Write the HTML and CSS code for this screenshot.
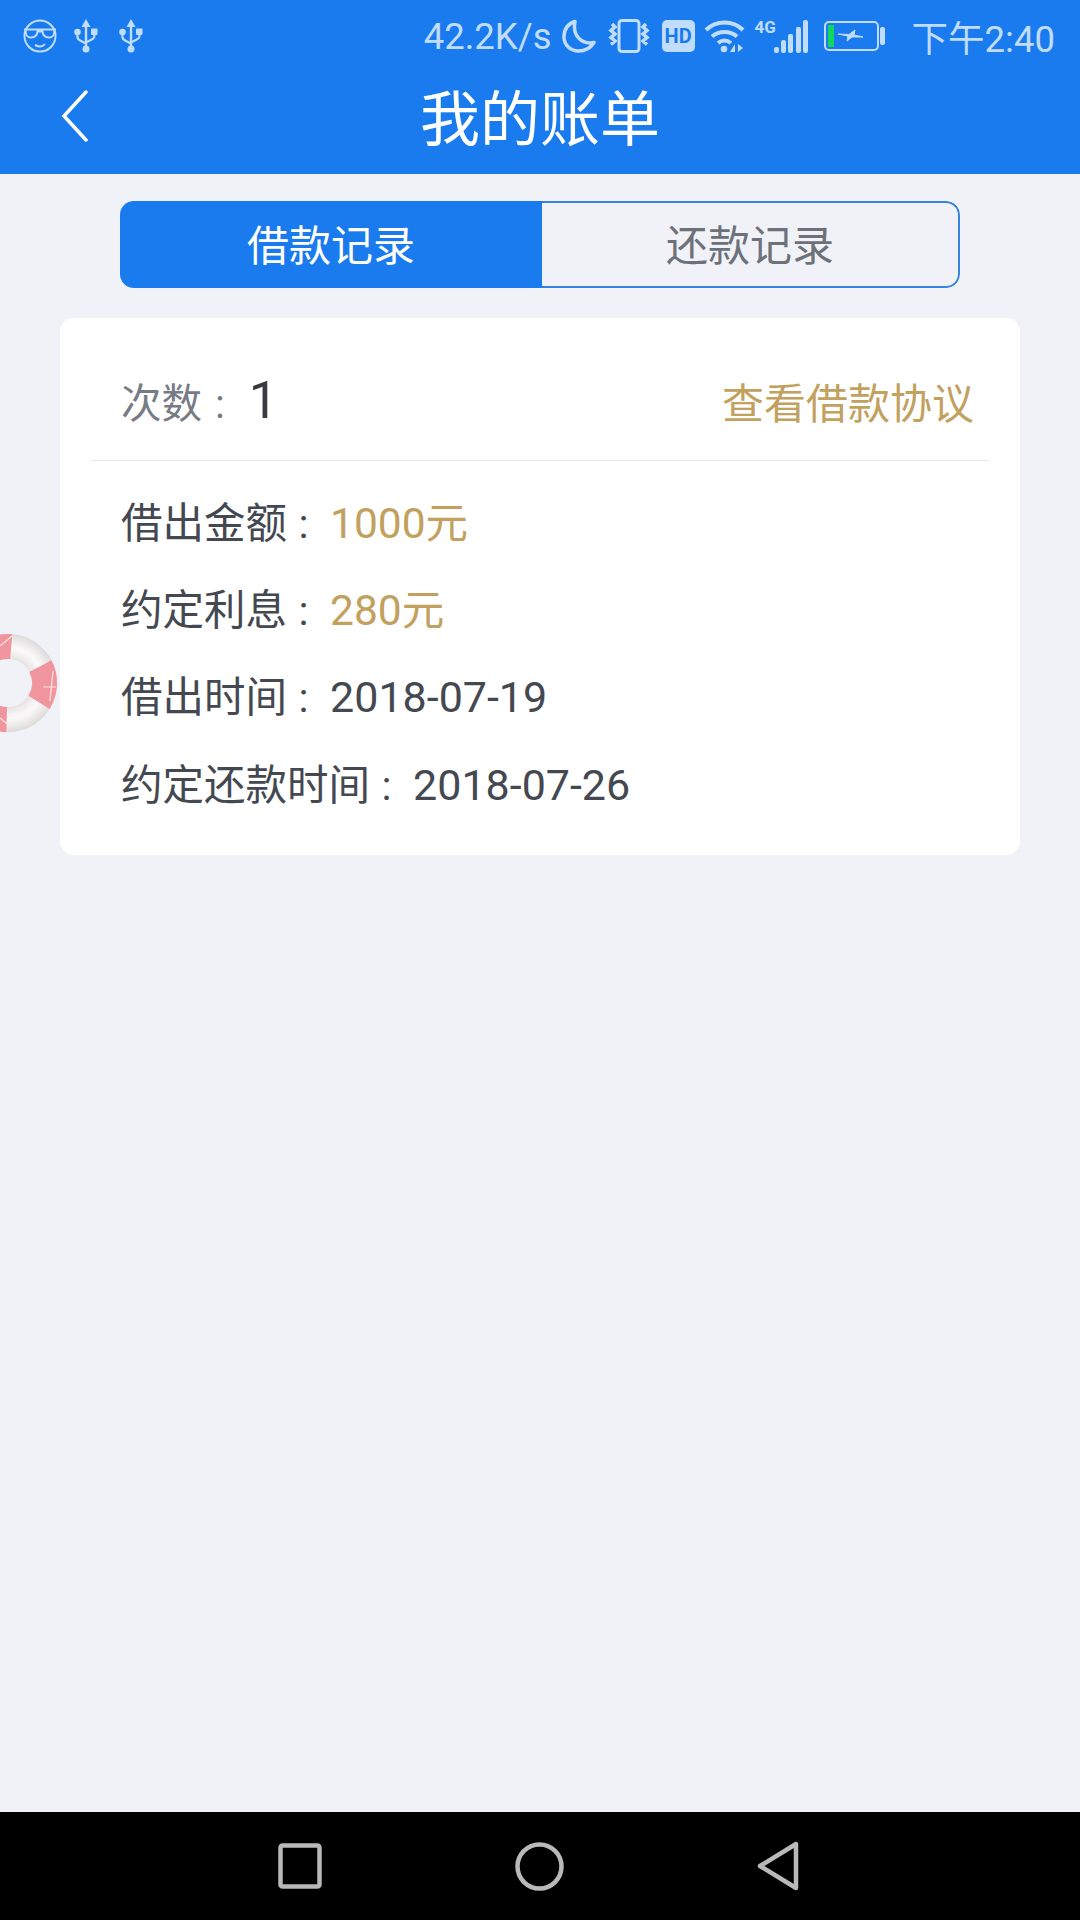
FILE: index.html
```html
<!DOCTYPE html>
<html lang="zh-CN">
<head>
   <meta charset="UTF-8">
   <title>我的账单</title>
   <link rel="stylesheet" href="styles.css">
</head>

<body>

<div class="top">
   <div class="status">
      <div class="status-left">
         <svg class="ic-face" viewBox="0 0 34 34" width="34" height="34" fill="none" stroke="#c0dcff" stroke-width="2">
            <circle cx="17" cy="17" r="15.500"/>
            <path d="M1 10.500h32M2.500 10.500c0 6 1.500 8 5.500 8s6-2 6.500-6h5c.5 4 2.500 6 6.500 6s5.500-2 5.500-8"/>
            <path d="M12 26c4 2 8 1.500 10-1"/>
         </svg>
         <svg class="ic-usb" viewBox="0 0 24 34" width="24" height="34" fill="#c0dcff">
            <path d="M12 0l4.500 8H13.200v19h-2.400V8H7.500z"/>
            <circle cx="12" cy="30" r="3.500"/>
            <circle cx="3.500" cy="13" r="3.300"/>
            <rect x="17" y="9.500" width="6.500" height="6.500" rx="1"/>
            <path d="M2.300 15h2.200v2c0 2 1 3 3 4l4 2v2.500l-5-2.500c-3-1.500-4.200-3-4.200-5.500zM19.300 15h2.200v1.500c0 2.500-1 4-4.200 5.500l-5 2.500V22l4-2c2-1 3-1.500 3-3z"/>
         </svg>
         <svg class="ic-usb" viewBox="0 0 24 34" width="24" height="34" fill="#c0dcff">
            <path d="M12 0l4.500 8H13.200v19h-2.400V8H7.500z"/>
            <circle cx="12" cy="30" r="3.500"/>
            <circle cx="3.500" cy="13" r="3.300"/>
            <rect x="17" y="9.500" width="6.500" height="6.500" rx="1"/>
            <path d="M2.300 15h2.200v2c0 2 1 3 3 4l4 2v2.500l-5-2.500c-3-1.500-4.200-3-4.200-5.500zM19.300 15h2.200v1.500c0 2.500-1 4-4.200 5.500l-5 2.500V22l4-2c2-1 3-1.500 3-3z"/>
         </svg>
      </div>
      <div class="status-right">
         <span class="speed">42.2K/s</span>
         <svg class="ic-moon" viewBox="0 0 34 34" width="34" height="34" fill="none" stroke="#c0dcff" stroke-width="3.500" stroke-linejoin="round">
            <path d="M13 2.500C5 5 2 11 2 18c0 8 6.500 14 14.500 14 6.500 0 12-3 15.500-8.500-11 2-22-5-19-21z"/>
         </svg>
         <svg class="ic-vib" viewBox="0 0 42 34" width="42" height="34" fill="none" stroke="#c0dcff" stroke-width="3">
            <rect x="11" y="1.500" width="20" height="31" rx="3"/>
            <path d="M4 5l3 3-4 3.500 4 3.500-4 3.500 4 3.500-4 3.500M38 5l-3 3 4 3.500-4 3.500 4 3.500-4 3.500 4 3.500" stroke-width="3.500"/>
         </svg>
         <span class="hd">HD</span>
         <svg class="ic-wifi" viewBox="0 0 42 34" width="42" height="34" fill="none" stroke="#c0dcff" stroke-width="4">
            <path d="M2 11C12 1 29 1 39 11M8 17.500c7-6 18-6 25 0M14 24c4-3 9-3 13 0"/>
            <circle cx="20" cy="30" r="3.300" fill="#c0dcff" stroke="none"/>
            <path d="M31 25v8h-5zM34 25l5 4-5 4z" fill="#c0dcff" stroke="none"/>
         </svg>
         <span class="net">
            <span class="net-label">4G</span>
            <svg viewBox="0 0 34 33" width="34" height="33" fill="#c0dcff">
               <rect x="0" y="27" width="5" height="6" rx="2"/>
               <rect x="7" y="20" width="5" height="13" rx="2"/>
               <rect x="14" y="14" width="5" height="19" rx="2"/>
               <rect x="22" y="7" width="5" height="26" rx="2"/>
               <rect x="29" y="0" width="5" height="33" rx="2"/>
            </svg>
         </span>
         <svg class="ic-batt" viewBox="0 0 62 30" width="62" height="30">
            <rect x="1" y="1" width="53" height="28" rx="4" fill="none" stroke="#c0dcff" stroke-width="2"/>
            <rect x="4" y="4" width="6" height="22" rx="1" fill="#0fd75f"/>
            <path d="M14 13l11 .5 6-4.500-1 5 9 2-11 0-5 4 1-5z" fill="#c0dcff" stroke="#c0dcff"/>
            <rect x="56" y="6" width="5" height="18" rx="2" fill="#c0dcff"/>
         </svg>
         <span class="clock">下午2:40</span>
      </div>
   </div>

   <div class="titlebar">
      <svg class="back" viewBox="0 0 28 52" width="28" height="52" fill="none" stroke="#fff" stroke-width="3.500" stroke-linecap="round">
         <path d="M25 2L3 26l22 24"/>
      </svg>
      <h1 class="title">我的账单</h1>
   </div>
</div>

<div class="main">
   <div class="tabs">
      <div class="tab on">借款记录</div>
      <div class="tab">还款记录</div>
   </div>

   <div class="card">
      <div class="card-head">
         <div class="count"><span class="label">次数<span class="sep">:</span></span><span class="num">1</span></div>
         <div class="link">查看借款协议</div>
      </div>
      <div class="rows">
         <div class="row">借出金额<span class="sep">:</span><span class="gold">1000元</span></div>
         <div class="row">约定利息<span class="sep">:</span><span class="gold">280元</span></div>
         <div class="row">借出时间<span class="sep">:</span><span class="val">2018-07-19</span></div>
         <div class="row">约定还款时间<span class="sep">:</span><span class="val">2018-07-26</span></div>
      </div>
   </div>

   <svg class="ring" viewBox="0 0 60 100" width="60" height="100">
      <defs>
         <radialGradient id="ringWhite" gradientUnits="userSpaceOnUse" cx="8" cy="50" r="49">
            <stop offset="0.5" stop-color="#e8e4e4"/>
            <stop offset="0.72" stop-color="#fbfafa"/>
            <stop offset="1" stop-color="#dfdbdb"/>
         </radialGradient>
      </defs>
      <circle cx="8" cy="50" r="36.500" fill="none" stroke="url(#ringWhite)" stroke-width="25"/>
      <g fill="none" stroke="#f0959d" stroke-width="25">
         <path d="M40.400 33.100A36.500 36.500 0 0 1 39 69.300"/>
         <path d="M-10.300 18.400A36.500 36.500 0 0 1 11.200 13.600"/>
         <path d="M6.700 86.500A36.500 36.500 0 0 1 -15.500 78"/>
      </g>
      <g fill="none" stroke="#fbe6e6" stroke-width="1.200">
         <path d="M43 54h13M53 38l-3 30"/>
         <path d="M0 13l12-10M0 85l10 8"/>
      </g>
   </svg>
</div>

<div class="navbar">
   <svg viewBox="0 0 44 46" width="44" height="46" fill="none" stroke="#b9b9b9" stroke-width="4.500">
      <rect x="2.500" y="2.500" width="39" height="41" rx="2"/>
   </svg>
   <svg viewBox="0 0 49 49" width="49" height="49" fill="none" stroke="#b9b9b9" stroke-width="4.500">
      <circle cx="24.500" cy="24.500" r="22"/>
   </svg>
   <svg viewBox="0 0 42 50" width="42" height="50" fill="none" stroke="#b9b9b9" stroke-width="4.500" stroke-linejoin="round">
      <path d="M39 3v44L3 25z"/>
   </svg>
</div>

</body>
</html>
```

FILE: styles.css
```css
html, body {
   height: 100%;
   margin: 0;
}

body {
   width: 1080px;
   height: 1920px;
   display: flex;
   flex-direction: column;
   background: #f0f2f7;
   font-family: Roboto, "Noto Sans CJK SC", sans-serif;
   color: #444851;
   overflow: hidden;
}

.top {
   background: #1a7bef;
   height: 174px;
}

.status {
   height: 66px;
   display: flex;
   justify-content: space-between;
   align-items: center;
   padding: 6px 25px 0 23px;
   box-sizing: border-box;
   color: #c0dcff;
}

.status-left, .status-right {
   display: flex;
   align-items: center;
}

.ic-usb {
   margin-left: 21px;
}

.ic-face + .ic-usb {
   margin-left: 17px;
}

.speed {
   font-size: 36.500px;
   margin-right: 10px;
}

.ic-vib {
   margin-left: 12px;
}

.hd {
   width: 33px;
   height: 32px;
   margin-left: 12px;
   border-radius: 5px;
   background: #c0dcff;
   color: #1a7bef;
   font-size: 20px;
   font-weight: 700;
   line-height: 32px;
   text-align: center;
}

.ic-wifi {
   margin-left: 9px;
}

.net {
   width: 53px;
   height: 33px;
   margin-left: 9px;
   position: relative;
   display: flex;
   justify-content: flex-end;
}

.net-label {
   position: absolute;
   left: 0;
   top: -3px;
   font-size: 17px;
   font-weight: 700;
}

.ic-batt {
   margin-left: 16px;
}

.clock {
   font-size: 36.500px;
   margin-left: 26px;
}

.titlebar {
   height: 108px;
   padding-bottom: 12px;
   box-sizing: border-box;
   position: relative;
   display: flex;
   justify-content: center;
   align-items: center;
}

.back {
   position: absolute;
   left: 61px;
   top: 24px;
}

.title {
   margin: 0;
   color: #fff;
   font-size: 60px;
   font-weight: 400;
}

.main {
   flex: 1;
   position: relative;
   padding: 27px 60px 0;
}

.tabs {
   width: 840px;
   height: 87px;
   margin: 0 auto;
   display: flex;
   border-radius: 14px;
   overflow: hidden;
}

.tab {
   flex: 1;
   box-sizing: border-box;
   padding-top: 2px;
   border: 2px solid #3483e0;
   border-left: none;
   border-radius: 0 14px 14px 0;
   font-size: 42px;
   line-height: 83px;
   text-align: center;
   color: #6d7179;
}

.tab.on {
   flex: none;
   width: 422px;
   border: none;
   border-radius: 0;
   padding-top: 4px;
   background: #1a7bef;
   color: #fff;
}

.card {
   margin-top: 30px;
   background: #fff;
   border-radius: 14px;
   height: 537px;
}

.card-head {
   height: 143px;
   margin: 0 30px;
   padding: 23px 16px 0 31px;
   box-sizing: border-box;
   border-bottom: 1px solid #e8eaee;
   display: flex;
   justify-content: space-between;
   align-items: center;
}

.count {
   display: flex;
   align-items: baseline;
}

.label {
   font-size: 40.500px;
   color: #777b84;
}

.sep {
   margin: 0 21.500px 0 11.500px;
}

.count .sep {
   margin: 0 24px 0 13px;
}

.num {
   font-size: 52px;
   color: #383a40;
}

.link {
   font-size: 42px;
   color: #c2a15f;
}

.rows {
   padding: 20px 0 0 61px;
}

.row {
   font-size: 41.500px;
   line-height: 86.600px;
}

.val {
   font-size: 43px;
}

.gold {
   font-size: 42.500px;
   color: #c2a15f;
}

.ring {
   position: absolute;
   left: 0;
   top: 459px;
}

.navbar {
   height: 108px;
   padding-right: 3px;
   background: #000;
   display: flex;
   justify-content: center;
   align-items: center;
   gap: 193px;
}
```
